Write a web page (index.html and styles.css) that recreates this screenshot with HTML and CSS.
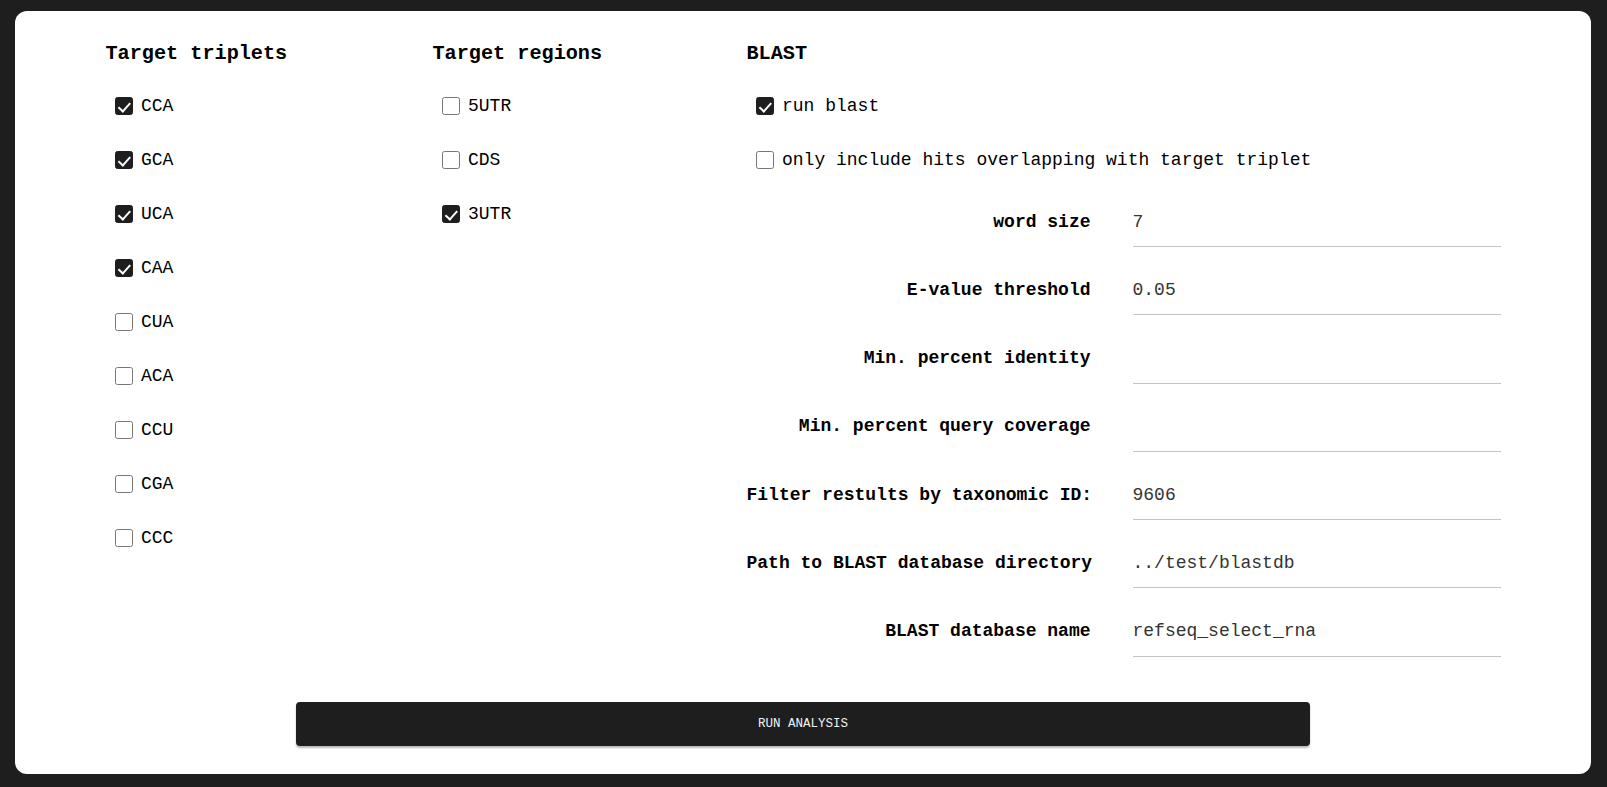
FILE: index.html
```html
<!DOCTYPE html>
<html lang="en">
<head>
<meta charset="utf-8">
<title>Analysis settings</title>
<link rel="stylesheet" href="styles.css">
</head>
<body>
<div class="page">
  <main class="card">
    <div class="columns">
      <section class="col">
        <h3 class="heading">Target triplets</h3>
        <label class="check-row"><input type="checkbox" checked><span>CCA</span></label>
        <label class="check-row"><input type="checkbox" checked><span>GCA</span></label>
        <label class="check-row"><input type="checkbox" checked><span>UCA</span></label>
        <label class="check-row"><input type="checkbox" checked><span>CAA</span></label>
        <label class="check-row"><input type="checkbox"><span>CUA</span></label>
        <label class="check-row"><input type="checkbox"><span>ACA</span></label>
        <label class="check-row"><input type="checkbox"><span>CCU</span></label>
        <label class="check-row"><input type="checkbox"><span>CGA</span></label>
        <label class="check-row"><input type="checkbox"><span>CCC</span></label>
      </section>
      <section class="col">
        <h3 class="heading">Target regions</h3>
        <label class="check-row"><input type="checkbox"><span>5UTR</span></label>
        <label class="check-row"><input type="checkbox"><span>CDS</span></label>
        <label class="check-row"><input type="checkbox" checked><span>3UTR</span></label>
      </section>
      <section class="col">
        <h3 class="heading">BLAST</h3>
        <label class="check-row"><input type="checkbox" checked><span>run blast</span></label>
        <label class="check-row"><input type="checkbox"><span>only include hits overlapping with target triplet</span></label>
        <div class="form">
          <label class="form-label" for="f1">word size</label>
          <input class="field" id="f1" type="text" value="7">
          <label class="form-label" for="f2">E-value threshold</label>
          <input class="field" id="f2" type="text" value="0.05">
          <label class="form-label" for="f3">Min. percent identity</label>
          <input class="field" id="f3" type="text" value="">
          <label class="form-label" for="f4">Min. percent query coverage</label>
          <input class="field" id="f4" type="text" value="">
          <label class="form-label" for="f5">Filter restults by taxonomic ID:</label>
          <input class="field" id="f5" type="text" value="9606">
          <label class="form-label" for="f6">Path to BLAST database directory</label>
          <input class="field" id="f6" type="text" value="../test/blastdb">
          <label class="form-label" for="f7">BLAST database name</label>
          <input class="field" id="f7" type="text" value="refseq_select_rna">
        </div>
      </section>
    </div>
    <button class="run-btn" type="button">RUN ANALYSIS</button>
  </main>
</div>
</body>
</html>
```
FILE: styles.css
```css
* { box-sizing: border-box; }

html, body {
  margin: 0;
  padding: 0;
  background: #1e1e1e;
  height: 100%;
}

body {
  font-family: "Liberation Mono", "DejaVu Sans Mono", monospace;
  color: #000;
}

.page {
  padding: 11px 16px 13px 15px;
  height: 787px;
}

.card {
  background: #fff;
  border-radius: 12px;
  height: 763px;
  padding-top: 30px;
}

.columns {
  width: 1395px;
  margin: 0 auto;
  display: grid;
  grid-template-columns: 327px 314px 754px;
}

.col {
  display: flex;
  flex-direction: column;
}

.heading {
  margin: 0 0 13px 0;
  font-size: 20.2px;
  line-height: 25px;
  font-weight: bold;
}

.check-row {
  display: flex;
  align-items: center;
  height: 54px;
  padding-left: 9.5px;
  gap: 8px;
  font-size: 18px;
  cursor: pointer;
}

.check-row input {
  -webkit-appearance: none;
  appearance: none;
  position: relative;
  width: 18px;
  height: 18px;
  margin: 0;
  flex: none;
  border: 1.2px solid #767676;
  border-radius: 2.5px;
  background: #fff;
}

.check-row input:checked {
  background: #1e1e1e;
  border-color: #1e1e1e;
}

.check-row input:checked::after {
  content: "";
  position: absolute;
  left: 5.2px;
  top: 1.6px;
  width: 5px;
  height: 9.5px;
  border-right: 2.4px solid #fff;
  border-bottom: 2.4px solid #fff;
  transform: rotate(42deg);
}

.form {
  margin-top: 8px;
  display: grid;
  grid-template-columns: 344px 368px;
  column-gap: 42px;
  row-gap: 16.3px;
  align-items: center;
}

.form-label {
  text-align: right;
  font-weight: bold;
  font-size: 18px;
  white-space: nowrap;
  padding-top: 1px;
}

.field {
  font-family: "Liberation Mono", "DejaVu Sans Mono", monospace;
  font-size: 18px;
  line-height: 21px;
  height: 52px;
  padding: 16px 0 14px;
  border: none;
  border-bottom: 1px solid #c4c4c4;
  color: #333;
  background: transparent;
  outline: none;
  width: 100%;
}

.run-btn {
  display: block;
  width: 1014px;
  height: 44px;
  margin: 45px auto 0;
  background: #1e1e1e;
  color: #f2f2f2;
  border: none;
  border-radius: 4px;
  font-family: "Liberation Mono", "DejaVu Sans Mono", monospace;
  font-size: 12.5px;
  letter-spacing: 0;
  box-shadow: 0 2px 2px rgba(0, 0, 0, 0.28);
  cursor: pointer;
}
```
